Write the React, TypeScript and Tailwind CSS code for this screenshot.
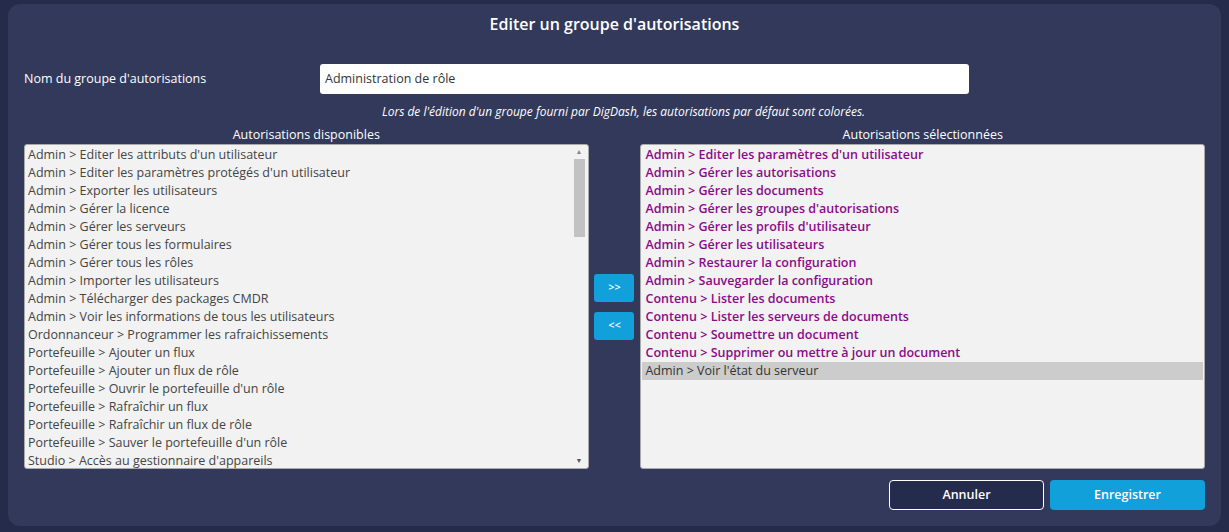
import React from 'react';

const available = [
  "Admin > Editer les attributs d'un utilisateur",
  "Admin > Editer les paramètres protégés d'un utilisateur",
  'Admin > Exporter les utilisateurs',
  'Admin > Gérer la licence',
  'Admin > Gérer les serveurs',
  'Admin > Gérer tous les formulaires',
  'Admin > Gérer tous les rôles',
  'Admin > Importer les utilisateurs',
  'Admin > Télécharger des packages CMDR',
  'Admin > Voir les informations de tous les utilisateurs',
  'Ordonnanceur > Programmer les rafraichissements',
  'Portefeuille > Ajouter un flux',
  'Portefeuille > Ajouter un flux de rôle',
  "Portefeuille > Ouvrir le portefeuille d'un rôle",
  'Portefeuille > Rafraîchir un flux',
  'Portefeuille > Rafraîchir un flux de rôle',
  "Portefeuille > Sauver le portefeuille d'un rôle",
  "Studio > Accès au gestionnaire d'appareils",
];

const selected = [
  "Admin > Editer les paramètres d'un utilisateur",
  'Admin > Gérer les autorisations',
  'Admin > Gérer les documents',
  "Admin > Gérer les groupes d'autorisations",
  "Admin > Gérer les profils d'utilisateur",
  'Admin > Gérer les utilisateurs',
  'Admin > Restaurer la configuration',
  'Admin > Sauvegarder la configuration',
  'Contenu > Lister les documents',
  'Contenu > Lister les serveurs de documents',
  'Contenu > Soumettre un document',
  'Contenu > Supprimer ou mettre à jour un document',
];

const App: React.FC = () => (
  <div className="w-[1229px] h-[532px] bg-[#252b4b] pt-[4px] px-[8px] pb-[6px] text-[13px] text-white" style={{ fontFamily: '"Open Sans", sans-serif' }}>
    <div className="h-full bg-[#32395b] rounded-[12px] px-[16px] pt-[8px] flex flex-col">
      <div className="text-center text-[16px] font-semibold h-[24px] leading-[24px]">Editer un groupe d'autorisations</div>
      <div className="flex items-center mt-[28px] h-[30px]">
        <div className="w-[296px] text-[12.5px]">Nom du groupe d'autorisations</div>
        <div className="w-[649px] h-[30px] bg-white rounded-[3px] px-[5px] flex items-center text-[#333] text-[12.5px]">Administration de rôle</div>
      </div>
      <div className="text-center italic text-[12px] mt-[8px] h-[20px] leading-[20px] pl-[18px]">Lors de l'édition d'un groupe fourni par DigDash, les autorisations par défaut sont colorées.</div>
      <div className="flex mt-[4px]">
        <div className="w-[565px] flex flex-col">
          <div className="text-center text-[12.5px] h-[18px] leading-[18px]">Autorisations disponibles</div>
          <div className="h-[325px] bg-[#f2f2f2] rounded-[3px] border border-[#aaa] flex">
            <div className="flex-1 pt-[1px] pl-[3px] text-[#444] text-[12.5px]">
              {available.map((t) => (
                <div key={t} className="h-[18px] leading-[18px] whitespace-nowrap">{t}</div>
              ))}
            </div>
            <div className="w-[11px] mr-[3px] flex flex-col items-center text-[#888] text-[7px]">
              <div className="h-[14px] leading-[14px]">▲</div>
              <div className="w-[11px] h-[78px] bg-[#c2c2c2]" />
              <div className="flex-1" />
              <div className="h-[14px] leading-[14px] text-[#555]">▼</div>
            </div>
          </div>
        </div>
        <div className="w-[52px] flex flex-col items-center justify-center gap-[10px] pt-[18px]">
          <div className="w-[40px] h-[28px] bg-[#12a0db] rounded-[3px] flex items-center justify-center text-[11px] font-semibold">&gt;&gt;</div>
          <div className="w-[40px] h-[28px] bg-[#12a0db] rounded-[3px] flex items-center justify-center text-[11px] font-semibold">&lt;&lt;</div>
        </div>
        <div className="w-[565px] flex flex-col">
          <div className="text-center text-[12.5px] h-[18px] leading-[18px]">Autorisations sélectionnées</div>
          <div className="h-[325px] bg-[#f2f2f2] rounded-[3px] border border-[#aaa] pt-[1px] px-[1px] text-[12.5px]">
            {selected.map((t) => (
              <div key={t} className="h-[18px] leading-[18px] pl-[3px] text-[#8b0a8b] font-semibold whitespace-nowrap">{t}</div>
            ))}
            <div className="h-[18px] leading-[18px] pl-[3px] text-[#333] bg-[#cccccc]">Admin &gt; Voir l'état du serveur</div>
          </div>
        </div>
      </div>
      <div className="flex justify-end gap-[6px] mt-[11px]">
        <div className="w-[155px] h-[30px] border border-white rounded-[4px] bg-[#242b4c] flex items-center justify-center text-[12.5px] font-semibold">Annuler</div>
        <div className="w-[155px] h-[30px] rounded-[4px] bg-[#12a0db] flex items-center justify-center text-[12.5px] font-semibold">Enregistrer</div>
      </div>
    </div>
  </div>
);

export default App;
